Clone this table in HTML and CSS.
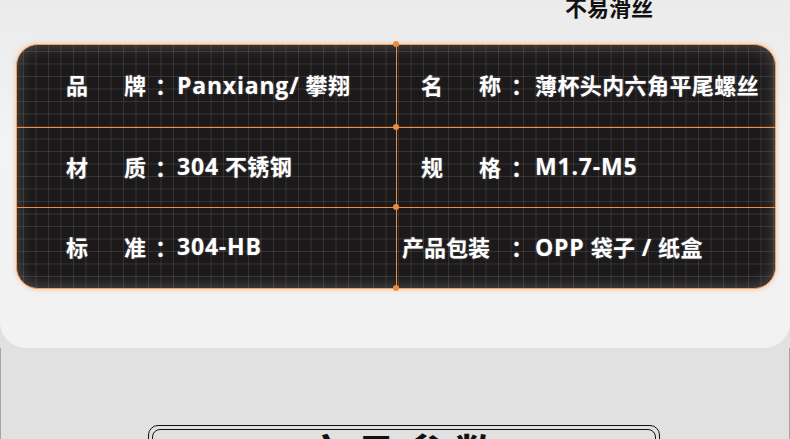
FILE: index.html
```html
<!DOCTYPE html>
<html lang="zh-CN">
    <head>
        <meta charset="UTF-8">
        <meta name="viewport" content="width=device-width, initial-scale=1.0">
        <title>产品参数</title>
        <link rel="stylesheet" href="styles.css">
    </head>

    <body>
        <div class="top">
            <div class="caption">不易滑丝</div>

            <div class="spec">
                <div class="cell cell-left">
                    <span class="label">品<span>牌</span></span>
                    <span class="colon">：</span>
                    <span class="value"><span class="latin">Panxiang/</span> 攀翔</span>
                </div>
                <div class="cell cell-right">
                    <span class="label">名<span>称</span></span>
                    <span class="colon">：</span>
                    <span class="value">薄杯头内六角平尾螺丝</span>
                </div>
                <div class="cell cell-left">
                    <span class="label">材<span>质</span></span>
                    <span class="colon">：</span>
                    <span class="value"><span class="latin">304</span> 不锈钢</span>
                </div>
                <div class="cell cell-right">
                    <span class="label">规<span>格</span></span>
                    <span class="colon">：</span>
                    <span class="value"><span class="latin">M1.7-M5</span></span>
                </div>
                <div class="cell cell-left last">
                    <span class="label">标<span>准</span></span>
                    <span class="colon">：</span>
                    <span class="value"><span class="latin">304-HB</span></span>
                </div>
                <div class="cell cell-right cell-wide last">
                    <span class="label">产品包装</span>
                    <span class="colon">：</span>
                    <span class="value"><span class="latin">OPP</span> 袋子 <span class="latin">/</span> 纸盒</span>
                </div>

                <i class="dot dot-1"></i>
                <i class="dot dot-2"></i>
                <i class="dot dot-3"></i>
                <i class="dot dot-4"></i>
            </div>
        </div>

        <div class="bottom">
            <div class="title-box">
                <div class="title-inner">产品参数</div>
            </div>
        </div>
    </body>
</html>
```

FILE: styles.css
```css
body {
    margin: 0;
    width: 790px;
    height: 439px;
    overflow: hidden;
    background-color: #e1e1e1;
    font-family: "Noto Sans CJK SC", "Noto Sans", sans-serif;
}

.top {
    display: flow-root;
    height: 348px;
    background: linear-gradient(#ebebeb, #f3f3f3 40%, #f2f2f2);
    border-radius: 0 0 26px 26px;
}

.caption {
    height: 44px;
    padding-left: 565px;
    margin-top: -5px;
    margin-bottom: 5px;
    font-size: 22px;
    line-height: 22px;
    font-weight: bold;
    color: #111111;
    box-sizing: border-box;
}

.spec {
    position: relative;
    margin: 0 14px 0 16px;
    height: 245px;
    box-sizing: border-box;
    display: grid;
    grid-template-columns: 380px 1fr;
    grid-template-rows: 83px 80px 1fr;
    border: 1px solid #f3a266;
    border-radius: 22px;
    background-color: #1b191a;
    background-image:
        linear-gradient(rgba(255, 255, 255, 0.11) 1px, transparent 1px),
        linear-gradient(90deg, rgba(255, 255, 255, 0.11) 1px, transparent 1px);
    background-size: 12.5px 12.5px;
    background-position: 6px 6px;
    box-shadow:
        0 0 4px 1px rgba(255, 175, 120, 0.55),
        inset 0 0 16px rgba(160, 160, 160, 0.45);
}

.cell {
    display: flex;
    align-items: center;
    padding-bottom: 4px;
    box-sizing: border-box;
    border-bottom: 1px solid #f08c44;
    font-size: 22px;
    font-weight: bold;
    color: #ffffff;
    text-shadow: 0 0 2px rgba(255, 255, 255, 0.35);
    white-space: nowrap;
}

.cell.last {
    border-bottom: none;
}

.cell-left {
    padding-left: 49px;
    border-right: 1px solid #f08c44;
}

.cell-right {
    padding-left: 24px;
}

.cell-wide {
    padding-left: 5px;
}

.label {
    display: flex;
    justify-content: space-between;
    width: 80px;
}

.cell-wide .label {
    width: 99px;
}

.colon {
    width: 22px;
    margin-left: 9px;
}

.cell-right .colon {
    margin-left: 10px;
}

.value {
    margin-left: 0;
    font-family: "Open Sans", "Noto Sans CJK SC", sans-serif;
    letter-spacing: 0.4px;
}

.cell-right .value {
    margin-left: 2px;
}

.latin {
    font-size: 23px;
    letter-spacing: 0.8px;
}

.dot {
    position: absolute;
    left: 376px;
    width: 6px;
    height: 6px;
    border-radius: 50%;
    background-color: #f08a3c;
}

.dot-1 { top: -4px; }
.dot-2 { top: 79px; }
.dot-3 { top: 159px; }
.dot-4 { top: 240px; }

.bottom {
    height: 91px;
    padding-top: 77px;
    box-sizing: border-box;
    border-left: 1px solid #a4a4a4;
    border-right: 1px solid #a4a4a4;
}

.title-box {
    margin-left: 147px;
    width: 512px;
    height: 80px;
    padding: 3px;
    box-sizing: border-box;
    border: 1px solid #111111;
    border-radius: 10px;
}

.title-inner {
    height: 100%;
    border: 1px solid #111111;
    border-radius: 8px;
    text-align: center;
    font-size: 44px;
    line-height: 46px;
    letter-spacing: 6px;
    font-weight: bold;
    color: #111111;
}
```
